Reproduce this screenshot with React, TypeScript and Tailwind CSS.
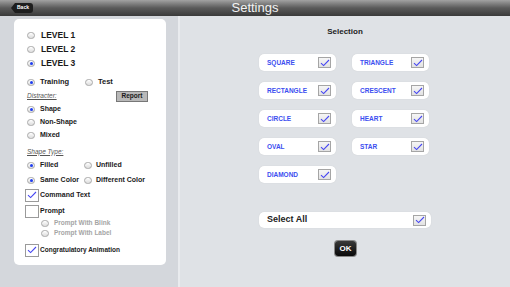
import React from "react";

const font = { fontFamily: '"Liberation Sans", Arial, sans-serif' };

function Radio({ on }: { on?: boolean }) {
  return (
    <span className="relative inline-flex h-[7px] w-[8px] shrink-0 items-center justify-center rounded-full border border-[#a9a9a9] bg-gradient-to-b from-white to-[#dcdcdc]">
      {on && <span className="h-[3px] w-[3px] rounded-full bg-[#1f3df0]" />}
    </span>
  );
}

function Check({ on, size = "sm" }: { on?: boolean; size?: "sm" | "lg" }) {
  const cls =
    size === "lg"
      ? "h-[13px] w-[14px] border-[#9a9a9a] bg-white"
      : "h-[11px] w-[13px] border-[#a5a5a5] bg-gradient-to-b from-[#f6f6f6] to-[#e2e2e2]";
  return (
    <span className={`inline-flex shrink-0 items-center justify-center border ${cls}`}>
      {on && (
        <svg width="10" height="8" viewBox="0 0 10 8">
          <path d="M1 4.2 L3.6 6.6 L9 1" fill="none" stroke="#4646f2" strokeWidth="1.1" />
        </svg>
      )}
    </span>
  );
}

function Row({ h, children, cls = "" }: { h: string; children: React.ReactNode; cls?: string }) {
  return <div className={`flex items-center ${h} ${cls}`}>{children}</div>;
}

function ShapeBtn({ label }: { label: string }) {
  return (
    <div className="flex h-[17px] w-[77px] items-center justify-between rounded-[5px] bg-white pl-[8px] pr-[5px] shadow-[0_0_1px_rgba(0,0,0,0.15)]">
      <span className="text-[6.5px] font-bold text-[#3b4ef0]">{label}</span>
      <Check on />
    </div>
  );
}

export default function App() {
  return (
    <div style={font} className="flex h-[287px] w-[510px] flex-col overflow-hidden bg-[#dfe2e6]">
      {/* header */}
      <div className="relative flex h-[16px] shrink-0 items-center justify-center bg-gradient-to-b from-[#a2a2a2] via-[#5a5a5a] to-[#3a3a3a]">
        <div className="absolute left-[11px] top-[3px] flex h-[10px] items-center">
          <span className="h-0 w-0 border-y-[5px] border-r-[4px] border-y-transparent border-r-[#1e1e1e]" />
          <span className="flex h-[10px] items-center rounded-r-[3px] bg-[#1e1e1e] pl-[2px] pr-[4px] text-[5px] font-bold text-white">
            Back
          </span>
        </div>
        <span className="text-[13px] text-[#f2f2f2]">Settings</span>
      </div>

      <div className="flex flex-1">
        {/* left */}
        <div className="w-[178px] shrink-0 bg-[#d4d7dc] pl-[14px] pt-[3px]">
          <div className="flex h-[246px] w-[152px] flex-col rounded-[5px] bg-white pl-[13px] pt-[9px] text-[#1a1a1a]">
            <Row h="h-[14px]"><Radio /><span className="ml-[6px] text-[8.5px] font-bold">LEVEL 1</span></Row>
            <Row h="h-[14px]"><Radio /><span className="ml-[6px] text-[8.5px] font-bold">LEVEL 2</span></Row>
            <Row h="h-[14px]"><Radio on /><span className="ml-[6px] text-[8.5px] font-bold">LEVEL 3</span></Row>
            <Row h="h-[14px]" cls="mt-[5px]">
              <div className="flex w-[58px] items-center"><Radio on /><span className="ml-[5px] text-[7.5px] font-bold">Training</span></div>
              <Radio /><span className="ml-[5px] text-[7.5px] font-bold">Test</span>
            </Row>
            <Row h="h-[14px]" cls="justify-between pr-[18px]">
              <span className="text-[6.5px] italic text-[#555] underline">Distracter:</span>
              <span className="flex h-[11px] w-[32px] items-center justify-center border border-[#777] bg-[#b8b8b8] text-[6.5px] font-bold">Report</span>
            </Row>
            <Row h="h-[13px]"><Radio on /><span className="ml-[5px] text-[7px] font-bold">Shape</span></Row>
            <Row h="h-[13px]"><Radio /><span className="ml-[5px] text-[7px] font-bold">Non-Shape</span></Row>
            <Row h="h-[13px]"><Radio /><span className="ml-[5px] text-[7px] font-bold">Mixed</span></Row>
            <Row h="h-[13px]" cls="mt-[3px]">
              <span className="text-[6.5px] italic text-[#555] underline">Shape Type:</span>
            </Row>
            <Row h="h-[15px]">
              <div className="flex w-[57px] items-center"><Radio on /><span className="ml-[5px] text-[7px] font-bold">Filled</span></div>
              <Radio /><span className="ml-[4px] text-[7px] font-bold">Unfilled</span>
            </Row>
            <Row h="h-[15px]">
              <div className="flex w-[57px] items-center"><Radio on /><span className="ml-[5px] text-[7px] font-bold">Same Color</span></div>
              <Radio /><span className="ml-[4px] text-[7px] font-bold">Different Color</span>
            </Row>
            <Row h="h-[14px]" cls="-ml-[2px]"><Check on size="lg" /><span className="ml-[1px] text-[7px] font-bold">Command Text</span></Row>
            <Row h="h-[14px]" cls="-ml-[2px] mt-[2px]"><Check size="lg" /><span className="ml-[1px] text-[7px] font-bold">Prompt</span></Row>
            <Row h="h-[10px]" cls="pl-[14px]"><Radio /><span className="ml-[5px] text-[6.5px] font-bold text-[#a5a5a5]">Prompt With Blink</span></Row>
            <Row h="h-[10px]" cls="pl-[14px]"><Radio /><span className="ml-[5px] text-[6.5px] font-bold text-[#a5a5a5]">Prompt With Label</span></Row>
            <Row h="h-[14px]" cls="-ml-[2px] mt-[5px]"><Check on size="lg" /><span className="ml-[1px] text-[6.5px] font-bold">Congratulatory Animation</span></Row>
          </div>
        </div>
        <div className="w-[2px] shrink-0 bg-[#e9ebee]" />

        {/* right */}
        <div className="flex flex-1 flex-col">
          <div className="flex h-[22px] items-end justify-center text-[8px] font-bold text-[#222]">Selection</div>
          <div className="ml-[79px] mt-[16px] grid w-[170px] grid-cols-2 gap-x-[16px] gap-y-[11px]">
            <ShapeBtn label="SQUARE" />
            <ShapeBtn label="TRIANGLE" />
            <ShapeBtn label="RECTANGLE" />
            <ShapeBtn label="CRESCENT" />
            <ShapeBtn label="CIRCLE" />
            <ShapeBtn label="HEART" />
            <ShapeBtn label="OVAL" />
            <ShapeBtn label="STAR" />
            <ShapeBtn label="DIAMOND" />
          </div>
          <div className="ml-[79px] mt-[29px] flex h-[16px] w-[172px] items-center justify-between rounded-[5px] bg-white pl-[8px] pr-[5px] shadow-[0_0_1px_rgba(0,0,0,0.15)]">
            <span className="text-[9px] font-bold text-[#222]">Select All</span>
            <Check on />
          </div>
          <div className="mt-[13px] flex justify-center pl-[1px]">
            <span className="flex h-[15px] w-[21px] items-center justify-center rounded-[3px] bg-gradient-to-b from-[#3a3a3a] to-[#0a0a0a] text-[8px] font-bold text-white shadow-[0_0_0_1px_#888]">
              OK
            </span>
          </div>
        </div>
      </div>
    </div>
  );
}
